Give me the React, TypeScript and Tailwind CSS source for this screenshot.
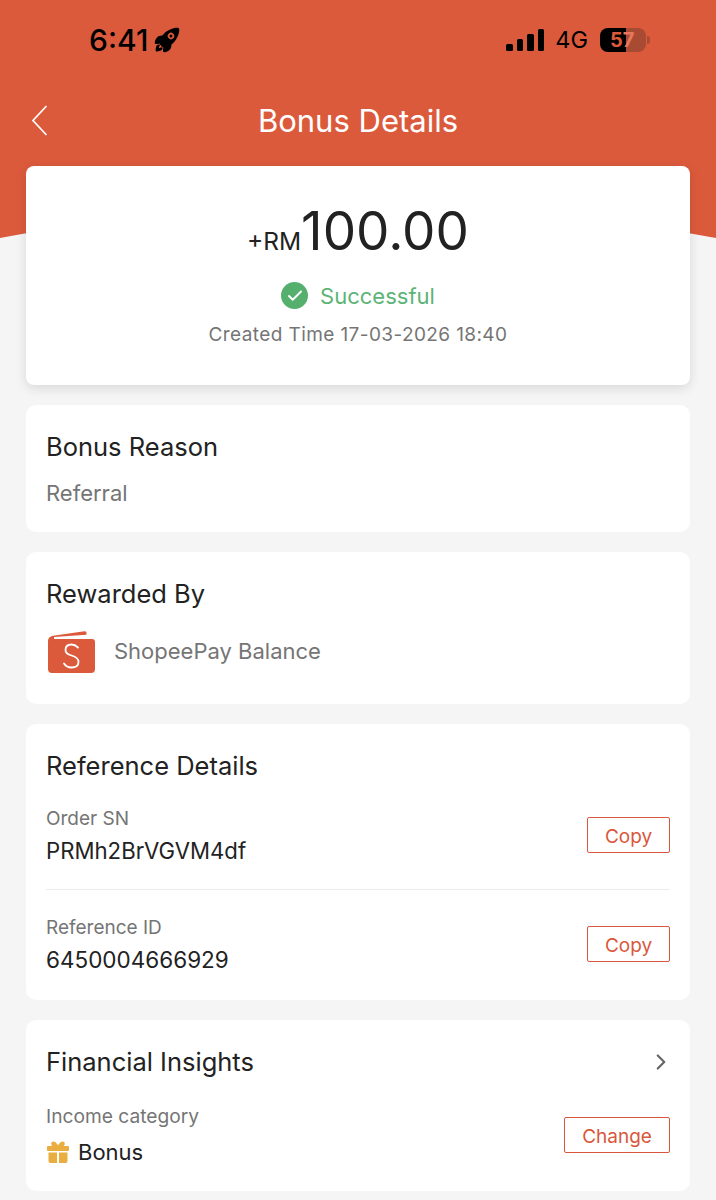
import { Check, ChevronRight } from 'lucide-react';
import { IoRocket } from 'react-icons/io5';

const font = { fontFamily: 'Inter, "Noto Sans", sans-serif' };

const OutlineButton = ({ label, width }: { label: string; width: string }) => (
  <button className={`${width} h-[36px] -mt-[2px] pt-[4px] rounded-[2px] border-[1.5px] border-[#d9573c] text-[19px] leading-none text-[#d9573c] bg-white flex items-center justify-center shrink-0`}>
    {label}
  </button>
);

const WalletIcon = () => (
  <svg width="50" height="46" viewBox="0 0 50 46" className="shrink-0">
    <path d="M2 13 Q2 8.5 7 7.7 L38.5 3.2 Q40.5 3 40.5 5 L40.5 6.8 L8 9 L8 11 L46 11 Q49 11 49 14 L49 41 Q49 45 45 45 L6 45 Q2 45 2 41 Z" fill="#dc5a3c" />
    <path d="M32 19.5 Q29 16.5 25.5 16.5 Q19.5 16.5 19.5 22 Q19.5 26 25.5 27.5 Q32.5 29.5 32.5 34 Q32.5 39.5 25.5 39.5 Q20.5 39.5 18 35.5" fill="none" stroke="#fff" strokeWidth="1.8" strokeLinecap="round" />
  </svg>
);

const GiftIcon = () => (
  <svg width="24" height="24" viewBox="0 0 24 24" className="shrink-0">
    <path d="M6 6 Q4 2 7 1.5 Q10 1.5 12 5.5 Q14 1.5 17 1.5 Q20 2 18 6 Z" fill="#e9ad40" />
    <rect x="1" y="6" width="22" height="5" rx="1" fill="#e9ad40" />
    <path d="M2.5 12.5 H11 V23 H4.5 Q2.5 23 2.5 21 Z M13 12.5 H21.5 V21 Q21.5 23 19.5 23 H13 Z" fill="#e9ad40" />
  </svg>
);

const BatteryIcon = () => (
  <div className="relative flex items-center">
    <div className="w-[46px] h-[24px] rounded-[8px] bg-[#a94a33] overflow-hidden flex">
      <div className="w-[26px] h-full bg-black" />
    </div>
    <div className="w-[3px] h-[8px] ml-[1px] rounded-r-full bg-[#a94a33]" />
    <span className="absolute left-[10px] top-0 h-[24px] flex items-center text-[20px] font-bold text-[#dc5a3c] leading-none">
      5<span className="text-[#e8765c]">7</span>
    </span>
  </div>
);

const SignalBars = () => (
  <div className="flex items-end gap-[4px]">
    <div className="w-[6.5px] h-[7px] rounded-[1.5px] bg-black" />
    <div className="w-[6.5px] h-[12px] rounded-[1.5px] bg-black" />
    <div className="w-[6.5px] h-[17px] rounded-[1.5px] bg-black" />
    <div className="w-[6.5px] h-[22px] rounded-[1.5px] bg-black" />
  </div>
);

export default function App() {
  return (
    <div style={font} className="relative w-[716px] h-[1200px] overflow-hidden bg-[#f5f5f5]">
      {/* Curved orange header behind the first card */}
      <svg width="716" height="240" viewBox="0 0 716 240" className="absolute left-0 top-0">
        <path d="M0 0 H716 V238 Q358 170 0 238 Z" fill="#dc5a3c" />
      </svg>

      <div className="relative flex flex-col">
        {/* Status bar */}
        <div className="h-[80px] pt-[23px] pl-[90px] pr-[66px] flex items-start justify-between">
          <div className="flex items-center gap-[5px] h-[34px]">
            <span className="text-[30px] font-medium text-black leading-none -ml-[1px]">6:41</span>
            <IoRocket size={28} className="text-black" />
          </div>
          <div className="flex items-center h-[34px]">
            <SignalBars />
            <span className="ml-[11px] mr-[12px] text-[23.5px] text-black leading-none">4G</span>
            <BatteryIcon />
          </div>
        </div>

        {/* Nav */}
        <div className="relative h-[86px] flex items-center justify-center pb-[5px]">
          <svg width="17" height="31" viewBox="0 0 17 31" className="absolute left-[31px] top-[25px]">
            <path d="M15.5 1 L2 15.5 L15.5 30" fill="none" stroke="#fff" strokeWidth="1.7" />
          </svg>
          <h1 className="text-[31px] font-normal text-white leading-none">Bonus Details</h1>
        </div>

        <div className="px-[26px] flex flex-col gap-[20px]">
          {/* Amount */}
          <div className="h-[219px] rounded-[8px] bg-white shadow-[0_3px_12px_rgba(0,0,0,0.12)] flex flex-col items-center pt-[39px]">
            <div className="flex items-baseline h-[58px] text-[#222]">
              <span className="text-[24.5px] leading-none">+RM</span>
              <span className="text-[53px] leading-none font-normal">100.00</span>
            </div>
            <div className="flex items-center gap-[12px] mt-[19px]">
              <div className="w-[27px] h-[27px] rounded-full bg-[#55b06d] flex items-center justify-center">
                <Check size={18} strokeWidth={2.5} className="text-white" />
              </div>
              <span className="text-[22px] text-[#5cb477] leading-none">Successful</span>
            </div>
            <p className="mt-[16px] text-[19px] tracking-[0.4px] text-[#757575] leading-none">Created Time 17-03-2026 18:40</p>
          </div>

          {/* Bonus Reason */}
          <div className="h-[127px] rounded-[10px] bg-white px-[20px] pt-[29px]">
            <h2 className="text-[25.5px] text-[#222] leading-none">Bonus Reason</h2>
            <p className="mt-[22px] text-[22px] text-[#757575] leading-none">Referral</p>
          </div>

          {/* Rewarded By */}
          <div className="h-[152px] rounded-[10px] bg-white px-[20px] pt-[29px]">
            <h2 className="text-[25.5px] text-[#222] leading-none">Rewarded By</h2>
            <div className="flex items-center gap-[18px] mt-[21px]">
              <WalletIcon />
              <span className="text-[22px] text-[#757575] leading-none">ShopeePay Balance</span>
            </div>
          </div>

          {/* Reference Details */}
          <div className="h-[276px] rounded-[10px] bg-white px-[20px] pt-[29px]">
            <h2 className="text-[25.5px] text-[#222] leading-none">Reference Details</h2>
            <div className="flex items-center justify-between mt-[26px] h-[62px]">
              <div>
                <p className="text-[19px] text-[#757575] leading-none">Order SN</p>
                <p className="mt-[12px] text-[22.2px] text-[#222] leading-none">PRMh2BrVGVM4df</p>
              </div>
              <OutlineButton label="Copy" width="w-[83px]" />
            </div>
            <div className="h-px bg-[#ececec] mt-[22px]" />
            <div className="flex items-center justify-between mt-[24px] h-[62px]">
              <div>
                <p className="text-[19px] text-[#757575] leading-none">Reference ID</p>
                <p className="mt-[12px] text-[22.5px] text-[#222] leading-none">6450004666929</p>
              </div>
              <OutlineButton label="Copy" width="w-[83px]" />
            </div>
          </div>

          {/* Financial Insights */}
          <div className="h-[171px] rounded-[10px] bg-white px-[20px] pt-[29px]">
            <div className="flex items-center justify-between h-[25px]">
              <h2 className="text-[25.5px] text-[#222] leading-none">Financial Insights</h2>
              <ChevronRight size={26} strokeWidth={2} className="text-[#666] -mr-[4px]" />
            </div>
            <div className="flex items-center justify-between mt-[33px]">
              <div>
                <p className="text-[19.2px] text-[#757575] leading-none">Income category</p>
                <div className="flex items-center gap-[8px] mt-[14px]">
                  <GiftIcon />
                  <span className="text-[22px] text-[#222] leading-none">Bonus</span>
                </div>
              </div>
              <OutlineButton label="Change" width="w-[106px]" />
            </div>
          </div>
        </div>
      </div>
    </div>
  );
}
